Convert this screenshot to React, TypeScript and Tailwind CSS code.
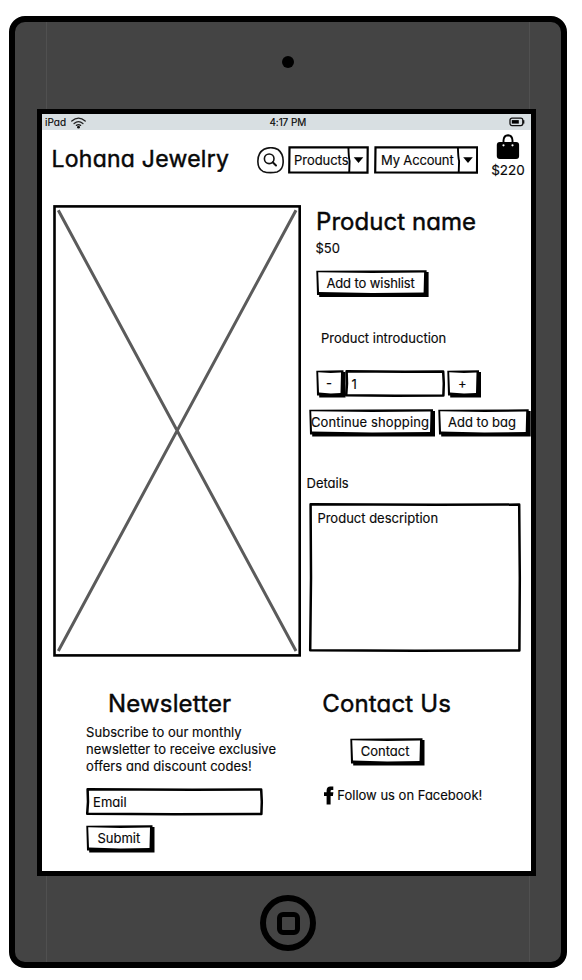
import type { ReactNode } from "react";

const font = "font-['Inter','Noto_Sans',sans-serif] [font-feature-settings:'cv11'_1,'calt'_0] [-webkit-text-stroke:0.15px_#080808]";
const heading = "whitespace-nowrap text-[24px] leading-8 [-webkit-text-stroke:0.45px_#080808]";

type BoxProps = { w: number; h: number; className?: string; children?: ReactNode };

/* Button with an uneven hand-inked edge and a solid drop edge. */
function SketchButton({ w, h, className = "", children }: BoxProps) {
  return (
    <button type="button" className={`relative block shrink-0 whitespace-nowrap text-left text-[13px] leading-[25px] ${className}`} style={{ width: w, height: h }}>
      <svg className="absolute inset-0 overflow-visible" width={w} height={h} aria-hidden="true">
        <path d={`M.3 .8L${w - 2} .3L${w - 2} 2H${w}V${h}H3.2V${h - 2}H1Z`} fill="#000" />
        <path d={`M2.2 2.3L${w / 2} 2.9L${w - 4.5} 2.5L${w - 5} ${h - 4.6}L${w / 2} ${h - 4}L3 ${h - 4.9}Z`} fill="#fff" />
      </svg>
      <span className="relative">{children}</span>
    </button>
  );
}

/* Field or panel outline with slightly uneven corners. */
function SketchField({ w, h, className = "", children }: BoxProps) {
  return (
    <div className={`relative shrink-0 whitespace-nowrap text-[13px] ${className}`} style={{ width: w, height: h }}>
      <svg className="absolute inset-0 overflow-visible" width={w} height={h} aria-hidden="true">
        <path
          d={`M1.6 1.2L${w * 0.6} 1.8L${w - 1.8} 1.6L${w - 1.2} ${h / 2}L${w - 1.6} ${h - 1.6}L${w / 2} ${h - 1.2}L1.2 ${h - 1.7}L2 ${h / 2}Z`}
          fill="#fff" stroke="#000" strokeWidth="2.5" strokeLinejoin="round"
        />
      </svg>
      <span className="relative">{children}</span>
    </div>
  );
}

function SketchSelect({ w, className = "", children }: { w: number; className?: string; children: ReactNode }) {
  return (
    <div className={`relative h-7 shrink-0 overflow-hidden whitespace-nowrap text-[13px] leading-7 ${className}`} style={{ width: w }}>
      <span>{children}</span>
      <svg className="absolute inset-0" width={w} height="28" aria-hidden="true">
        <path d={`M1.5 1.3H${w - 1.3}L${w - 1.5} 26.7L1.2 26.5Z`} fill="none" stroke="#000" strokeWidth="2.2" />
        <path d={`M${w - 20.6} 1Q${w - 20.3} 12 ${w - 19.4} 15L${w - 19.8} 27`} fill="none" stroke="#000" strokeWidth="1.9" />
        <path d={`M${w - 15.3} 11.3H${w - 5.7}L${w - 10.5} 17Z`} fill="#000" />
      </svg>
    </div>
  );
}

function StatusBar() {
  return (
    <div className="flex h-4 items-center bg-[#d8dfe2] text-[10px] leading-4">
      <span className="ml-[3.5px] w-[25.5px]">iPad</span>
      <svg className="mt-px" width="15" height="12" viewBox="0 0 15 12" fill="none" stroke="#222" strokeWidth="1.3" strokeLinecap="round" aria-hidden="true">
        <path d="M.8 4Q7.5-1.6 14.2 4M3.1 6.5Q7.5 2.9 11.9 6.5M5.4 8.4Q7.5 6.9 9.6 8.4" />
        <circle cx="7.5" cy="10.2" r="1.4" fill="#111" stroke="none" />
      </svg>
      <span className="ml-[184px] w-[38px] whitespace-nowrap tracking-[-0.1px]">4:17 PM</span>
      <svg className="ml-[201px]" width="16" height="10" viewBox="0 0 16 10" aria-hidden="true">
        <rect x="1" y="1.2" width="12.8" height="7.4" rx="2" fill="none" stroke="#111" strokeWidth="1.3" />
        <path d="M14.6 3.2V6.6" stroke="#111" strokeWidth="1.5" />
        <rect x="2.8" y="3.1" width="7" height="3.5" fill="#000" />
      </svg>
    </div>
  );
}

function Header() {
  return (
    <header className="flex h-[75px] items-start">
      <h1 className="ml-[10px] mt-[13px] w-[205px] whitespace-nowrap text-[23px] leading-8 tracking-[0.25px] [-webkit-text-stroke:0.45px_#080808]">Lohana Jewelry</h1>
      <svg className="mt-[17px] shrink-0" width="27" height="27" viewBox="0 0 27 27" fill="none" stroke="#111" strokeLinecap="round" aria-hidden="true">
        <path d="M7 2.3Q14-1 21 2.5Q26.8 7 26.1 16Q25.7 23 20 25Q12 26.6 6 24.4Q1 22 .9 15Q.5 6 7 2.3Z" strokeWidth="1.6" />
        <circle cx="12.2" cy="11.8" r="4.8" strokeWidth="1.6" />
        <path d="M15.7 15.2L19 18.5" strokeWidth="2" />
      </svg>
      <SketchSelect w={81} className="ml-[4px] mt-4 pl-[6.5px] tracking-[-0.05px]">Products</SketchSelect>
      <SketchSelect w={104.5} className="ml-[5px] mt-4 pl-[7.5px] tracking-[-0.15px]">My Account</SketchSelect>
      <div className="ml-[12px] mt-1 flex w-[36px] flex-col items-center">
        <svg width="24" height="26" viewBox="0 0 24 26" aria-hidden="true">
          <path d="M7.5 11V6.5Q7.8 1.3 12 1.2Q16.2 1.3 16.5 6.5V11" fill="none" stroke="#000" strokeWidth="1.9" />
          <rect x=".8" y="8" width="22.3" height="17" rx="3" />
          <circle cx="7.5" cy="11.3" r="1.1" fill="#fff" />
          <circle cx="16.5" cy="11.3" r="1.1" fill="#fff" />
        </svg>
        <span className="-mt-px text-[13.5px] leading-[22px]">$220</span>
      </div>
    </header>
  );
}

function ProductImage() {
  return (
    <svg className="ml-[11px] shrink-0" width="248" height="452" viewBox="0 0 248 452" aria-label="Product image">
      <rect x="1.5" y="1.4" width="245.2" height="449" fill="#fff" stroke="#000" strokeWidth="2.6" />
      <path d="M5.3 5.3L243 446M243 5.3L5.3 446" stroke="#5b5b5b" strokeWidth="3" />
    </svg>
  );
}

function ProductPanel() {
  return (
    <section className="w-[230px] shrink-0">
      <h2 className={`ml-[15.5px] pt-px tracking-[0.05px] ${heading}`}>Product name</h2>
      <p className="ml-[15px] mt-px text-[13px] leading-[19px]">$50</p>
      <SketchButton w={112.6} h={27} className="ml-[15.4px] mt-3 pl-[10.5px] tracking-[-0.1px]">Add to wishlist</SketchButton>
      <p className="ml-[20.5px] mt-[31px] text-[13px] leading-5">Product introduction</p>
      <div className="mt-[22px] flex pl-[15.4px]">
        <SketchButton w={29.5} h={27.5} className="pl-[10px]">-</SketchButton>
        <SketchField w={100} h={27} className="pl-[6px] leading-[28px]">1</SketchField>
        <SketchButton w={34} h={27.5} className="ml-[1.5px] pl-[11px]">+</SketchButton>
      </div>
      <div className="mt-[11px] flex pl-[8px]">
        <SketchButton w={126} h={27.5} className="pl-[2.5px] tracking-[0.12px]">Continue shopping</SketchButton>
        <SketchButton w={92.7} h={27.5} className="ml-[3px] pl-[10.5px]">Add to bag</SketchButton>
      </div>
      <p className="ml-[6px] mt-[37px] text-[13px] leading-[21px]">Details</p>
      <SketchField w={212} h={149} className="ml-[8.4px] mt-[9px] pl-[8.5px] pt-[5px] leading-[21px]">Product description</SketchField>
    </section>
  );
}

function Footer() {
  return (
    <footer className="flex">
      <section className="w-[259px] pl-[44.6px]">
        <h2 className={`ml-[22px] mt-[31px] tracking-[0.15px] ${heading}`}>Newsletter</h2>
        <p className="mt-[4px] whitespace-nowrap text-[13px] leading-[17px] tracking-[0.04px]">
          Subscribe to our monthly<br />newsletter to receive exclusive<br />offers and discount codes!
        </p>
        <SketchField w={177} h={27.5} className="mt-[13px] pl-[7px] leading-[28px]">Email</SketchField>
        <SketchButton w={68.5} h={27.5} className="ml-[0.4px] mt-[9px] pl-[11px]">Submit</SketchButton>
      </section>
      <section className="w-[230px] pl-[21.8px]">
        <h2 className={`mt-[31px] tracking-[0.15px] ${heading}`}>Contact Us</h2>
        <SketchButton w={74.5} h={27.5} className="ml-[27.4px] mt-[18px] pl-[11px]">Contact</SketchButton>
        <div className="mt-[19px] flex items-center">
          <svg className="ml-[1.5px] mt-px" width="10" height="19" viewBox="0 0 10 19" aria-hidden="true">
            <path d="M2.6 18.6V10H0V6.2H2.6V4.5Q2.7.7 6.4.6H9.3V4H7.6Q6.6 4 6.6 5V6.2H9.4L8.9 10H6.6V18.6Z" />
          </svg>
          <span className="ml-[3.5px] whitespace-nowrap text-[13px] leading-5">Follow us on Facebook!</span>
        </div>
      </section>
    </footer>
  );
}

export default function App() {
  return (
    <div className={`h-[980px] w-[582px] overflow-hidden bg-white pl-[9px] pt-4 text-[#080808] ${font}`}>
      <div className="h-[952px] w-[558px] rounded-[16px] border-[6px] border-black bg-[#444]">
        <div className="mx-[31px] flex h-full flex-col items-center border-x border-[#505050]">
          <div className="mt-[34px] size-3 shrink-0 rounded-full bg-black" />
          <main className="mr-[4px] mt-[41px] h-[767px] w-[499px] shrink-0 border-[5px] border-black bg-white">
            <StatusBar />
            <Header />
            <div className="flex h-[452px]">
              <ProductImage />
              <ProductPanel />
            </div>
            <Footer />
          </main>
          <div className="mt-[19px] flex size-14 shrink-0 items-center justify-center rounded-full border-[6px] border-black">
            <div className="size-[23px] rounded-[6px] border-[5px] border-black" />
          </div>
        </div>
      </div>
    </div>
  );
}
